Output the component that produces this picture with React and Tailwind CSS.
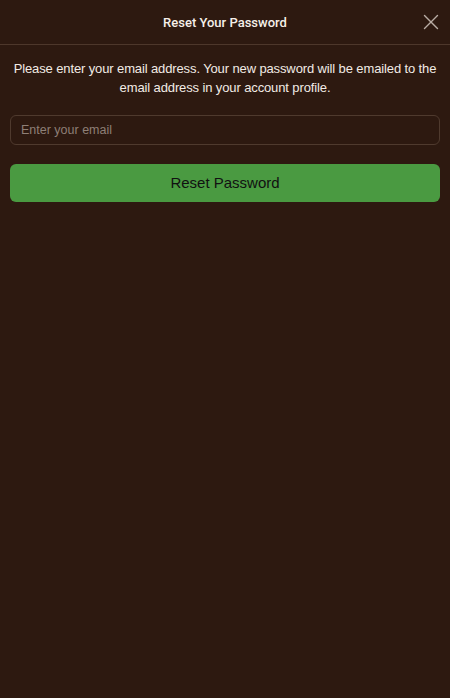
import { X } from 'lucide-react';

const App = () => {
  return (
    <div
      className="min-h-screen w-full bg-[#2d1910] text-white flex flex-col"
      style={{ fontFamily: '"Liberation Sans", Arial, sans-serif' }}
    >
      {/* Header */}
      <header className="h-[45px] pt-[1px] border-b border-[#4d372b] flex items-center justify-center relative flex-shrink-0">
        <h1 className="text-[13px] font-medium text-[#f5efe9]" style={{ fontFamily: 'Roboto, "Liberation Sans", sans-serif' }}>
          Reset Your Password
        </h1>
        <button className="absolute right-[6px] top-[9px] text-[#b8aca4]">
          <X className="w-[26px] h-[26px]" strokeWidth={1.3} />
        </button>
      </header>

      <main className="px-[10px] pt-[14px] flex flex-col">
        <p className="-mx-[2px] text-[13px] leading-[19px] tracking-[-0.12px] text-center text-[#f2ebe5]">
          Please enter your email address. Your new password will be emailed to the email address in your account profile.
        </p>

        <input
          type="email"
          placeholder="Enter your email"
          className="mt-[18px] h-[30px] w-full rounded-[6px] border border-[#4f3a2e] bg-transparent px-[10px] text-[12.5px] text-white placeholder:text-[#8e7f76] outline-none"
        />

        <button className="mt-[19px] h-[38px] w-full rounded-[6px] bg-[#4a9a41] text-[15px] text-[#111] flex items-center justify-center">
          Reset Password
        </button>
      </main>
    </div>
  );
};

export default App;
